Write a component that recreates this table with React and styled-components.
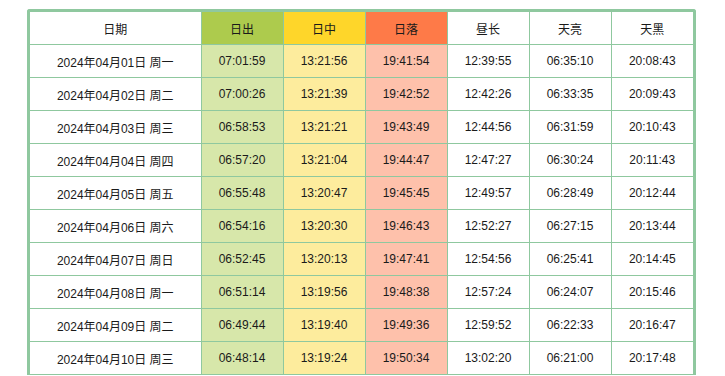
import React from "react";
import styled, { createGlobalStyle } from "styled-components";

const GlobalStyle = createGlobalStyle`
  body {
    margin: 0;
    background: #fff;
    font-family: "Liberation Sans", "Noto Sans CJK SC", sans-serif;
  }
`;

const Page = styled.div`
  padding: 9px 0 0 27px;
`;

const Frame = styled.div`
  width: 663px;
  border: 3px solid #8fc89f;
  border-bottom: none;
  border-radius: 3px 3px 0 0;
`;

const Table = styled.table`
  width: 663px;
  border-collapse: collapse;
  table-layout: fixed;
  font-size: 12px;
  color: #1a1a1a;
`;

const colors = {
  rise: { head: "#adcb4d", cell: "#d7e7aa" },
  noon: { head: "#fed62a", cell: "#fdec9d" },
  set: { head: "#fe7a48", cell: "#fec1ab" },
};

const Cell = styled.td`
  height: 32px;
  padding: 0;
  text-align: center;
  border: 1px solid #8fc89f;
  background: ${(p) => (p.$tone ? colors[p.$tone].cell : "#fff")};
  &:first-child {
    border-left: none;
  }
  &:last-child {
    border-right: none;
  }
`;

const Head = styled.th`
  height: 32px;
  padding: 0;
  font-weight: normal;
  text-align: center;
  border: 1px solid #8fc89f;
  border-top: none;
  background: ${(p) => (p.$tone ? colors[p.$tone].head : "#fff")};
  &:first-child {
    border-left: none;
  }
  &:last-child {
    border-right: none;
  }
`;

const rows = [
  ["2024年04月01日 周一", "07:01:59", "13:21:56", "19:41:54", "12:39:55", "06:35:10", "20:08:43"],
  ["2024年04月02日 周二", "07:00:26", "13:21:39", "19:42:52", "12:42:26", "06:33:35", "20:09:43"],
  ["2024年04月03日 周三", "06:58:53", "13:21:21", "19:43:49", "12:44:56", "06:31:59", "20:10:43"],
  ["2024年04月04日 周四", "06:57:20", "13:21:04", "19:44:47", "12:47:27", "06:30:24", "20:11:43"],
  ["2024年04月05日 周五", "06:55:48", "13:20:47", "19:45:45", "12:49:57", "06:28:49", "20:12:44"],
  ["2024年04月06日 周六", "06:54:16", "13:20:30", "19:46:43", "12:52:27", "06:27:15", "20:13:44"],
  ["2024年04月07日 周日", "06:52:45", "13:20:13", "19:47:41", "12:54:56", "06:25:41", "20:14:45"],
  ["2024年04月08日 周一", "06:51:14", "13:19:56", "19:48:38", "12:57:24", "06:24:07", "20:15:46"],
  ["2024年04月09日 周二", "06:49:44", "13:19:40", "19:49:36", "12:59:52", "06:22:33", "20:16:47"],
  ["2024年04月10日 周三", "06:48:14", "13:19:24", "19:50:34", "13:02:20", "06:21:00", "20:17:48"],
];

const columns = [
  { title: "日期", width: 171 },
  { title: "日出", width: 82, tone: "rise" },
  { title: "日中", width: 82, tone: "noon" },
  { title: "日落", width: 82, tone: "set" },
  { title: "昼长", width: 82 },
  { title: "天亮", width: 82 },
  { title: "天黑", width: 82 },
];

export default function App() {
  return (
    <Page>
      <GlobalStyle />
      <Frame>
        <Table>
          <colgroup>
            {columns.map((c) => (
              <col key={c.title} style={{ width: c.width }} />
            ))}
          </colgroup>
          <thead>
            <tr>
              {columns.map((c) => (
                <Head key={c.title} $tone={c.tone}>
                  {c.title}
                </Head>
              ))}
            </tr>
          </thead>
          <tbody>
            {rows.map((r) => (
              <tr key={r[0]}>
                {r.map((v, i) => (
                  <Cell key={i} $tone={columns[i].tone}>
                    {v}
                  </Cell>
                ))}
              </tr>
            ))}
          </tbody>
        </Table>
      </Frame>
    </Page>
  );
}
